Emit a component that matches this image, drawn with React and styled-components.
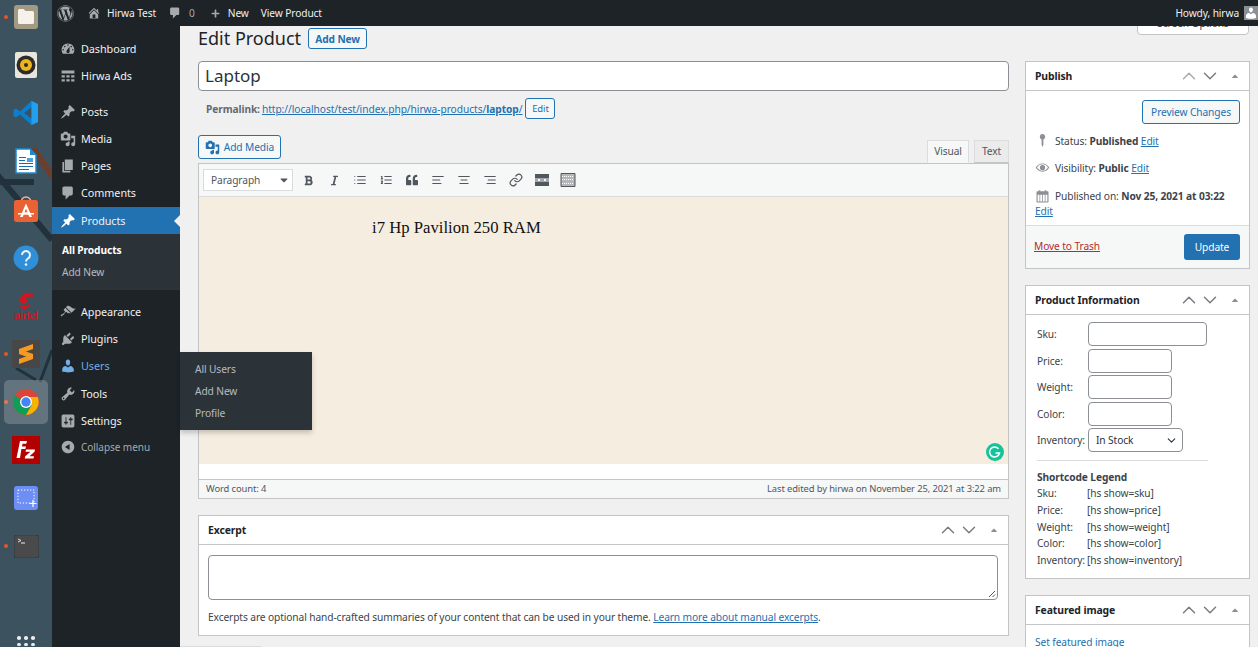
import React from "react";
import styled, { createGlobalStyle } from "styled-components";
import { FaWordpress, FaBold, FaItalic, FaQuoteLeft, FaCaretDown, FaCaretUp, FaPlus } from "react-icons/fa";
import { LuList, LuListOrdered, LuAlignLeft, LuAlignCenter, LuAlignRight, LuLink, LuChevronUp, LuChevronDown } from "react-icons/lu";

const FONT = `"Noto Sans", "Open Sans", sans-serif`;

const Global = createGlobalStyle`
  html, body { margin: 0; padding: 0; height: 100%; overflow: hidden; }
  body { font-family: ${FONT}; font-size: 10.2px; letter-spacing: -0.1px; color: #3c434a; background: #f0f0f1; }
  * { box-sizing: border-box; }
  a { color: #2271b1; }
`;

const dashicons = {
  dashboard: "M3.76 16h12.48c1.1-1.37 1.76-3.11 1.76-5 0-4.42-3.58-8-8-8s-8 3.58-8 8c0 1.89.66 3.63 1.76 5zM10 4c.55 0 1 .45 1 1s-.45 1-1 1-1-.45-1-1 .45-1 1-1zM6 6c.55 0 1 .45 1 1s-.45 1-1 1-1-.45-1-1 .45-1 1-1zm8 0c.55 0 1 .45 1 1s-.45 1-1 1-1-.45-1-1 .45-1 1-1zm-5.37 5.55L12 7v6c0 1.1-.9 2-2 2s-2-.9-2-2c0-.57.24-1.08.63-1.45zM4 10c.55 0 1 .45 1 1s-.45 1-1 1-1-.45-1-1 .45-1 1-1zm12 0c.55 0 1 .45 1 1s-.45 1-1 1-1-.45-1-1 .45-1 1-1z",
  ads: "M2 3h16v4H2zM2 9h4v3H2zM8 9h4v3H8zM14 9h4v3h-4zM2 14h4v3H2zM8 14h4v3H8zM14 14h4v3h-4z",
  pin: "M10.44 3.02l1.82-1.82 6.36 6.35-1.83 1.82c-1.05-.68-2.48-.57-3.41.36l-.75.75c-.92.93-1.04 2.35-.35 3.41l-1.83 1.82-2.41-2.41-2.8 2.79c-.42.42-3.38 2.71-3.8 2.29s1.86-3.39 2.28-3.81l2.79-2.79L4.1 9.36l1.83-1.82c1.05.69 2.48.57 3.4-.36l.75-.75c.93-.92 1.05-2.35.36-3.41z",
  media: "M13 11V4c0-.55-.45-1-1-1h-1.67L9 1H5L3.67 3H2c-.55 0-1 .45-1 1v7c0 .55.45 1 1 1h10c.55 0 1-.45 1-1zM7 4.5c1.38 0 2.5 1.12 2.5 2.5S8.38 9.5 7 9.5 4.5 8.38 4.5 7 5.62 4.5 7 4.5zM14 6h5v10.5c0 1.38-1.12 2.5-2.5 2.5S14 17.88 14 16.5s1.12-2.5 2.5-2.5c.17 0 .34.02.5.05V9h-3V6zm-4 8.05V13h2v3.5c0 1.38-1.12 2.5-2.5 2.5S7 17.88 7 16.5 8.12 14 9.5 14c.17 0 .34.02.5.05z",
  page: "M6 15V2h10v13H6zm-1 1h8v2H3V5h2v11z",
  comment: "M5 2h9c1.1 0 2 .9 2 2v7c0 1.1-.9 2-2 2h-2l-5 5v-5H5c-1.1 0-2-.9-2-2V4c0-1.1.9-2 2-2z",
  brush: "M14.48 11.06L7.41 3.99l1.5-1.5c.5-.56 2.3-.47 3.51.32 1.21.8 1.43 1.28 2.91 2.1 1.18.64 2.45 1.26 4.45.85zm-.71.71L6.7 4.7 4.93 6.47c-.39.39-.39 1.02 0 1.41l1.06 1.06c.39.39.39 1.03 0 1.42-.6.6-1.43 1.11-2.21 1.69-.35.26-.7.53-1.01.84C1.43 13.23.5 14.84 1 15.3c.49.46 2.06-.43 3.4-1.8.3-.3.57-.66.83-1.01.59-.78 1.09-1.62 1.7-2.22.39-.39 1.02-.39 1.41 0l1.06 1.06c.39.39 1.02.39 1.41 0z",
  plug: "M13.11 4.36L9.87 7.6 8 5.73l3.24-3.24c.35-.34 1.05-.2 1.56.32.52.51.66 1.21.31 1.55zm-8 1.77l.91-1.12 9.01 9.01-1.19.84c-.71.71-2.63 1.16-3.82 1.16H6.14L4.9 17.26c-.59.59-1.54.59-2.12 0-.59-.58-.59-1.53 0-2.12l1.24-1.24v-3.88c0-1.13.4-3.19 1.09-3.89zm7.26 3.97l3.24-3.24c.34-.35 1.04-.21 1.55.31.52.51.66 1.21.31 1.55l-3.24 3.25z",
  user: "M10 9.25c-2.27 0-2.73-3.44-2.73-3.44C7 4.02 7.82 2 9.97 2c2.16 0 2.98 2.02 2.71 3.81 0 0-.41 3.44-2.68 3.44zm0 2.57L12.72 10c2.39 0 4.52 2.33 4.52 4.53v2.49s-3.65 1.13-7.24 1.13c-3.65 0-7.24-1.13-7.24-1.13v-2.49c0-2.25 1.94-4.48 4.47-4.48z",
  tools: "M16.68 9.77c-1.34 1.34-3.3 1.67-4.95.99l-5.41 6.52c-.99.99-2.59.99-3.58 0s-.99-2.59 0-3.57l6.52-5.42c-.68-1.65-.35-3.61.99-4.95 1.28-1.28 3.12-1.62 4.72-1.06l-2.89 2.89 2.82 2.82 2.86-2.87c.53 1.58.18 3.39-1.08 4.65zM3.81 16.21c.4.39 1.04.39 1.43 0 .4-.4.4-1.04 0-1.43-.39-.4-1.03-.4-1.43 0-.39.39-.39 1.03 0 1.43z",
  settings: "M18 16V4c0-1.1-.9-2-2-2H4c-1.1 0-2 .9-2 2v12c0 1.1.9 2 2 2h12c1.1 0 2-.9 2-2zM8 11h1c.55 0 1 .45 1 1s-.45 1-1 1H8v1.5c0 .28-.22.5-.5.5s-.5-.22-.5-.5V13H6c-.55 0-1-.45-1-1s.45-1 1-1h1V5.5c0-.28.22-.5.5-.5s.5.22.5.5V11zm5-2h-1c-.55 0-1-.45-1-1s.45-1 1-1h1V5.5c0-.28.22-.5.5-.5s.5.22.5.5V7h1c.55 0 1 .45 1 1s-.45 1-1 1h-1v5.5c0 .28-.22.5-.5.5s-.5-.22-.5-.5V9z",
  collapse: "M10 2.16c4.33 0 7.84 3.51 7.84 7.84s-3.51 7.84-7.84 7.84S2.16 14.33 2.16 10 5.71 2.16 10 2.16zm2 11.72V6.12L6.18 9.97z",
  home: "M16 8.5l1.53 1.53-1.06 1.06L10 4.62l-6.47 6.47-1.06-1.06L10 2.5l4 4v-2h2v4zm-6-2.46l6 5.99V18H4v-5.97zM12 17v-5H8v5h4z",
  location: "M10 1.5a3.6 3.6 0 0 1 1.2 7v7.2L10 18.5l-1.2-2.8V8.5a3.6 3.6 0 0 1 1.2-7z",
  eye: "M10 4.5c4 0 7.2 2.4 9 5.5-1.8 3.1-5 5.5-9 5.5S2.8 13.1 1 10c1.8-3.1 5-5.5 9-5.5zm0 1.3c-3.1 0-5.7 1.7-7.3 4.2 1.6 2.5 4.2 4.2 7.3 4.2s5.7-1.7 7.3-4.2c-1.6-2.5-4.2-4.2-7.3-4.2zM10 6.500a3.500 3.500 0 1 1 0 7 3.500 3.500 0 0 1 0-7z",
  calendar: "M3 3h2V1.500h2V3h6V1.500h2V3h2a1 1 0 0 1 1 1v13a1 1 0 0 1-1 1H3a1 1 0 0 1-1-1V4a1 1 0 0 1 1-1zm.500 4.500V16.500h2.500v-9zm3.500 0v9h2.500v-9zm3.500 0v9H13v-9zm3.500 0v9h2.500v-9z",
};

const Dashicon = ({ name, size = 16, className }) => (
  <svg className={className} width={size} height={size} viewBox="0 0 20 20" fill="currentColor" aria-hidden="true">
    <path d={dashicons[name]} fillRule="evenodd" />
  </svg>
);

/* ---- ubuntu dock ---- */
const Shell = styled.div`
  display: flex;
  width: 100%;
  height: 100vh;
  overflow: hidden;
`;
const Dock = styled.aside`
  position: relative;
  flex: 0 0 52px;
  display: flex;
  flex-direction: column;
  align-items: center;
  background: #3d525f;
  overflow: hidden;
`;
const Wallpaper = styled.svg`
  position: absolute;
  inset: 0;
`;
const DockList = styled.div`
  position: relative;
  margin-top: -7px;
  display: flex;
  flex-direction: column;
  width: 100%;
`;
const DockItem = styled.div`
  position: relative;
  height: 48.1px;
  display: flex;
  align-items: center;
  justify-content: center;
  ${(p) => p.$running && `
    &::before {
      content: "";
      position: absolute;
      left: 4px;
      top: 50%;
      margin-top: -2px;
      width: 4px;
      height: 4px;
      border-radius: 50%;
      background: #e95420;
    }
  `}
  ${(p) => p.$active && `
    &::after {
      content: "";
      position: absolute;
      left: 4px;
      top: 2px;
      width: 44px;
      height: 44px;
      border-radius: 5px;
      background: rgba(255, 255, 255, 0.2);
    }
    & > svg { position: relative; z-index: 1; }
  `}
`;
const AirtelWord = styled.span`
  position: absolute;
  left: 0;
  right: 0;
  top: 27px;
  text-align: center;
  font: bold 10.5px "Liberation Sans", sans-serif;
  color: #d8131b;
  letter-spacing: -0.2px;
`;
const AppGrid = styled.div`
  position: absolute;
  left: 17px;
  top: 636px;
  display: grid;
  grid-template-columns: repeat(3, 4px);
  gap: 3.2px;
  & > i { width: 3.6px; height: 3.6px; border-radius: 50%; background: #e8ecee; }
`;

const FolderIcon = () => (
  <svg width="26" height="26" viewBox="0 0 26 26"><rect x="1" y="1" width="24" height="24" rx="3" fill="#a39a83" /><path d="M5 6.500a1.500 1.500 0 0 1 1.500-1.500h4l2 2h7a1.500 1.500 0 0 1 1.500 1.500v10a1.500 1.500 0 0 1-1.500 1.500h-13A1.500 1.500 0 0 1 5 18.500z" fill="#f5f2ec" /></svg>
);
const RhythmIcon = () => (
  <svg width="22" height="26" viewBox="0 0 22 26"><rect width="22" height="26" rx="2" fill="#e9e6dc" /><circle cx="11" cy="13" r="9.500" fill="#2b2b2b" /><circle cx="11" cy="13" r="6" fill="#edb51c" /><circle cx="11" cy="13" r="2" fill="#2b2b2b" /></svg>
);
const CodeIcon = () => (
  <svg width="26" height="26" viewBox="0 0 26 26"><path d="M18.500 1L25 4v18l-6.500 3L7 14.500l-4 3-2.500-1.500v-6L3 8.500l4 3z" fill="#0a7fd0" /><path d="M18.500 7.500L11 13l7.500 5.500z" fill="#3d525f" /><path d="M18.500 1L25 4v18l-6.500 3z" fill="#22a0ee" /></svg>
);
const WriterIcon = () => (
  <svg width="22" height="26" viewBox="0 0 22 26"><path d="M1 1h14l6 6v18H1z" fill="#fff" stroke="#1b8ad0" strokeWidth="1.500" /><path d="M15 1l6 6h-6z" fill="#1b8ad0" /><path d="M4 9h7v1H4zM4 12h6v1H4zM4 15h14v1H4zM4 18h14v1H4zM4 21h10v1H4z" fill="#1b6ea8" /><rect x="12" y="10" width="6" height="4" fill="#4aa3dc" /></svg>
);
const StoreIcon = () => (
  <svg width="24" height="26" viewBox="0 0 24 26"><path d="M7 6a5 5 0 0 1 10 0" fill="none" stroke="#f6b49a" strokeWidth="1.300" /><rect y="4" width="24" height="22" rx="2.500" fill="#ea6133" /><path d="M12 7.500L18 21h-2.700l-1-2.500H9.700l-1 2.500H6zm0 5l-1.500 3.800h3z" fill="#fff" fillRule="evenodd" /><rect x="4" y="17" width="16" height="1.500" fill="#fff" /></svg>
);
const HelpIcon = () => (
  <svg width="26" height="26" viewBox="0 0 26 26"><circle cx="13" cy="13" r="12.500" fill="#2f8fd8" /><path d="M9 10a4 4 0 1 1 6 3.500c-1.300.8-2 1.400-2 3" fill="none" stroke="#f2f7fb" strokeWidth="2" /><circle cx="13" cy="19.500" r="1.300" fill="#f2f7fb" /></svg>
);
const AirtelIcon = () => (
  <svg width="16" height="18" viewBox="0 0 16 18" style={{ marginTop: -10 }}><path d="M13 1C8 0 2 3 2 8c0 3 3 4 5 3 3-1 3-4 0-4 2-2 5-3 7-2 2-1 1-4-1-4zM1 14c4 1 9-1 11-3 0 3-2 5-5 6-3 0-5-1-6-3z" fill="#d8131b" /></svg>
);
const SublimeIcon = () => (
  <svg width="28" height="28" viewBox="0 0 28 28"><rect width="28" height="28" rx="2" fill="#474747" /><path d="M21 4v5L7 14V9zM21 14v5L7 24v-5zM7 9l14 5v5L7 14z" fill="#f79a25" /></svg>
);
const ChromeIcon = () => (
  <svg width="26" height="26" viewBox="0 0 26 26"><circle cx="13" cy="13" r="13" fill="#db4437" /><path d="M13 13L1.700 6.500A13 13 0 0 0 13 26l5-9z" fill="#0f9d58" /><path d="M13 8h11.700A13 13 0 0 1 13 26l5.500-9.500z" fill="#f4b400" /><circle cx="13" cy="13" r="6" fill="#fff" /><circle cx="13" cy="13" r="4.700" fill="#4285f4" /></svg>
);
const ZillaIcon = () => (
  <svg width="28" height="28" viewBox="0 0 28 28"><rect width="28" height="28" fill="#b20000" /><path d="M8 5h7l-.7 2.800H10.500L10 10.500h4L13.300 13H9.400L8 22H4.500zM14 13.500h9l-.5 2.200-5 4.500H22l-.5 2.300H12.700l.5-2.200 5.200-4.600H13.500z" fill="#fff" /></svg>
);
const ShotIcon = () => (
  <svg width="24" height="24" viewBox="0 0 24 24"><rect width="24" height="24" rx="3" fill="#6d8ef5" /><rect x="4" y="4" width="16" height="13" fill="none" stroke="#fff" strokeDasharray="1.300 1.700" /><path d="M19 14v7M15.500 17.500h7" stroke="#fff" strokeWidth="1.200" /></svg>
);
const TermIcon = () => (
  <svg width="25" height="23" viewBox="0 0 25 23"><rect width="25" height="23" rx="3" fill="#4a4a4a" stroke="#2f3a42" /><path d="M4 4l3 1.500L4 7" fill="none" stroke="#eee" strokeWidth=".9" /><path d="M7 8h4" stroke="#eee" /></svg>
);

const dockApps = [
  { icon: FolderIcon, running: true }, { icon: RhythmIcon }, { icon: CodeIcon }, { icon: WriterIcon },
  { icon: StoreIcon }, { icon: HelpIcon }, { icon: AirtelIcon, airtel: true }, { icon: SublimeIcon, running: true },
  { icon: ChromeIcon, running: true, active: true }, { icon: ZillaIcon }, { icon: ShotIcon }, { icon: TermIcon, running: true },
];

/* ---- wp admin bar ---- */
const Page = styled.div`
  position: relative;
  flex: 1;
  min-width: 0;
  display: flex;
  flex-direction: column;
`;
const AdminBar = styled.header`
  position: relative;
  z-index: 5;
  flex: 0 0 26px;
  display: flex;
  align-items: center;
  padding-left: 5px;
  background: #1d2327;
  color: #f0f0f1;
`;
const BarItem = styled.span`
  display: inline-flex;
  align-items: center;
  gap: ${(p) => p.$gap || 5}px;
  margin-right: ${(p) => p.$mr || 0}px;
  & > svg { color: #a7aaad; }
`;
const Howdy = styled.span`
  margin-left: auto;
  display: inline-flex;
  align-items: center;
  gap: 5px;
`;
const Avatar = styled.span`
  width: 14px;
  height: 14px;
  display: flex;
  align-items: flex-end;
  justify-content: center;
  background: #8c8f94;
  color: #fff;
  overflow: hidden;
`;
const Body = styled.div`
  flex: 1;
  min-height: 0;
  display: flex;
`;

/* ---- left menu ---- */
const Sidebar = styled.nav`
  position: relative;
  z-index: 3;
  flex: 0 0 128px;
  background: #1d2327;
  padding-top: 9px;
`;
const MenuRow = styled.div`
  position: relative;
  height: ${(p) => p.$h || 27}px;
  margin-top: ${(p) => p.$mt || 0}px;
  display: flex;
  align-items: center;
  gap: 5.5px;
  padding-left: 7.5px;
  font-size: ${(p) => (p.$muted ? 10 : 10.8)}px;
  letter-spacing: -0.05px;
  color: ${(p) => (p.$hover ? "#72aee6" : p.$muted ? "#a7aaad" : "#f0f0f1")};
  background: ${(p) => (p.$current ? "#2271b1" : "transparent")};
  & > svg { color: ${(p) => (p.$hover ? "#72aee6" : p.$current ? "#fff" : "#a7aaad")}; flex: none; }
  ${(p) => p.$current && `
    &::after {
      content: "";
      position: absolute;
      right: 0;
      top: 50%;
      margin-top: -6px;
      border: 6px solid transparent;
      border-right-color: #f0f0f1;
    }
  `}
`;
const SubMenu = styled.div`
  background: #2c3338;
  height: 56px;
  padding: 5px 0 0 10px;
`;
const SubLink = styled.div`
  height: 22px;
  line-height: 22px;
  color: ${(p) => (p.$current ? "#fff" : "rgba(240,246,252,.7)")};
  font-weight: ${(p) => (p.$current ? 700 : 400)};
`;
const Flyout = styled.div`
  position: absolute;
  left: 128px;
  top: 326px;
  width: 132px;
  height: 78px;
  padding: 6px 0 0 15px;
  background: #2c3338;
  box-shadow: 0 3px 5px rgba(0, 0, 0, 0.2);
`;

/* ---- content ---- */
const Content = styled.main`
  position: relative;
  flex: 1;
  min-width: 0;
  padding-left: 18px;
  overflow: hidden;
`;
const ScreenTab = styled.div`
  position: absolute;
  right: 9px;
  top: -11px;
  width: 112px;
  height: 20px;
  background: #fff;
  border: 1px solid #c3c4c7;
  border-radius: 0 0 4px 4px;
  text-align: center;
  line-height: 14px;
`;
const BottomEdge = styled.div`
  position: absolute;
  left: 0;
  bottom: 0;
  width: 82px;
  height: 1px;
  background: #dcdcde;
`;
const HeadRow = styled.div`
  display: flex;
  align-items: center;
  height: 21px;
  margin: 2px 0 12px;
  gap: 7px;
`;
const Title = styled.h1`
  margin: -2px 0 0;
  font-size: 18px;
  font-weight: 400;
  letter-spacing: 0;
  color: #1d2327;
  white-space: nowrap;
`;
const OutlineBtn = styled.a`
  display: inline-flex;
  align-items: center;
  justify-content: center;
  gap: 4px;
  flex: none;
  width: ${(p) => p.$w}px;
  height: ${(p) => p.$h}px;
  border: 1px solid #2271b1;
  border-radius: 3px;
  background: #f6f7f7;
  color: #2271b1;
  font-size: ${(p) => p.$fs || 10.2}px;
  font-weight: ${(p) => (p.$bold ? 700 : 400)};
  text-decoration: none;
  white-space: nowrap;
`;
const Columns = styled.div`
  display: grid;
  grid-template-columns: 811px 225px;
  gap: 16px;
  align-items: start;
`;
const TitleInput = styled.div`
  height: 30px;
  padding-left: 6px;
  background: #fff;
  border: 1px solid #8c8f94;
  border-radius: 4px;
  color: #2c3338;
  font-size: 17px;
  letter-spacing: 0;
  line-height: 28px;
`;
const Permalink = styled.div`
  display: flex;
  align-items: center;
  gap: 2px;
  height: 21px;
  margin: 7px 0 16px 8px;
  white-space: nowrap;
  & > b { color: #646970; }
  & > a:first-of-type { letter-spacing: -0.05px; margin-right: 1px; }
`;
const EditorTabs = styled.div`
  display: flex;
  justify-content: space-between;
  align-items: flex-start;
  height: 28px;
`;
const TabGroup = styled.div`
  display: flex;
  gap: 5px;
  margin-top: 5px;
`;
const Tab = styled.span`
  height: 23px;
  width: ${(p) => p.$w}px;
  border: 1px solid #dcdcde;
  border-bottom-color: ${(p) => (p.$on ? "#f6f7f7" : "#c3c4c7")};
  background: ${(p) => (p.$on ? "#f6f7f7" : "#ebebeb")};
  color: #50575e;
  line-height: 20px;
  text-align: center;
`;
const EditorFrame = styled.div`
  border: 1px solid #c3c4c7;
  background: #fff;
`;
const Toolbar = styled.div`
  display: flex;
  align-items: center;
  height: 33px;
  padding-left: 4px;
  background: #f6f7f7;
  border-bottom: 1px solid #dcdcde;
  color: #50575e;
`;
const FormatSelect = styled.div`
  position: relative;
  width: 90px;
  height: 22px;
  margin-right: 2px;
  padding-left: 7px;
  background: #fff;
  border: 1px solid #dcdcde;
  line-height: 20px;
  color: #50575e;
  & > svg { position: absolute; right: 2px; top: 4px; }
`;
const ToolBtn = styled.span`
  width: 26px;
  height: 26px;
  display: flex;
  align-items: center;
  justify-content: center;
`;
const EditArea = styled.div`
  position: relative;
  height: 267px;
  padding: 19px 0 0 173px;
  background: #f5eee0;
  font-family: "Liberation Serif", serif;
  font-size: 16.7px;
  letter-spacing: 0;
  line-height: 24px;
  color: #111;
`;
const Grammarly = styled.svg`
  position: absolute;
  right: 4px;
  bottom: 3px;
`;
const WhiteGap = styled.div`
  height: 15px;
  background: #fff;
`;
const StatusBar = styled.div`
  display: flex;
  justify-content: space-between;
  align-items: center;
  height: 19px;
  padding: 0 7px 2px;
  background: #f6f7f7;
  border-top: 1px solid #c3c4c7;
  font-size: 9.4px;
  color: #50575e;
`;
const Box = styled.section`
  background: #fff;
  border: 1px solid #c3c4c7;
  margin-top: ${(p) => p.$mt || 0}px;
`;
const BoxHead = styled.div`
  display: flex;
  align-items: center;
  justify-content: space-between;
  height: 29px;
  padding: 0 9px 0 9px;
  border-bottom: 1px solid #c3c4c7;
  font-size: 10.4px;
  font-weight: 700;
  color: #1d2327;
`;
const HeadIcons = styled.span`
  display: flex;
  align-items: center;
  color: #787c82;
  & > svg:nth-child(1) { margin-right: -1px; color: ${(p) => (p.$first ? "#a7aaad" : "#787c82")}; }
  & > svg:nth-child(3) { margin-left: 9px; color: #8c8f94; }
`;
const ExcerptBody = styled.div`
  padding: 10px 10px 0 9px;
  height: 90px;
`;
const ExcerptArea = styled.div`
  position: relative;
  height: 45px;
  background: #fff;
  border: 1px solid #8c8f94;
  border-radius: 4px;
  & > svg { position: absolute; right: 1px; bottom: 1px; }
`;
const HelpText = styled.p`
  margin: 10px 0 0;
  white-space: nowrap;
`;

/* ---- right column ---- */
const PublishTop = styled.div`
  padding: 9px 9px 0 9px;
  height: 134px;
`;
const PreviewWrap = styled.div`
  display: flex;
  justify-content: flex-end;
  margin-bottom: 3px;
`;
const PubRow = styled.div`
  display: flex;
  align-items: center;
  gap: 5px;
  height: ${(p) => p.$h || 27}px;
  margin-top: ${(p) => p.$mt || 0}px;
  white-space: nowrap;
  & > svg { color: #8c8f94; flex: none; }
`;
const TimeEdit = styled.a`
  display: block;
  margin-top: -2px;
`;
const PublishFoot = styled.div`
  display: flex;
  align-items: center;
  justify-content: space-between;
  height: 43px;
  padding: 0 9px 0 8px;
  background: #f6f7f7;
  border-top: 1px solid #dcdcde;
  & > a { color: #b32d2e; margin-top: -2px; }
`;
const UpdateBtn = styled.span`
  width: 56px;
  height: 26px;
  background: #2271b1;
  border-radius: 3px;
  color: #fff;
  line-height: 26px;
  text-align: center;
`;
const InfoBody = styled.div`
  padding: 7px 11px 0;
  height: 263px;
`;
const FieldGrid = styled.div`
  display: grid;
  grid-template-columns: 51px 1fr;
  row-gap: 2.6px;
  align-items: center;
`;
const Field = styled.div`
  height: 24px;
  width: ${(p) => p.$w}px;
  background: #fff;
  border: 1px solid #8c8f94;
  border-radius: 4px;
`;
const SelectField = styled(Field)`
  display: flex;
  align-items: center;
  justify-content: space-between;
  padding: 0 4px 0 7px;
  color: #2c3338;
`;
const Rule = styled.hr`
  width: 171px;
  margin: 8px 0 8px;
  border: 0;
  border-top: 1px solid #dcdcde;
`;
const LegendTitle = styled.div`
  font-weight: 700;
  line-height: 16px;
`;
const LegendGrid = styled.div`
  display: grid;
  grid-template-columns: 50px 1fr;
  line-height: 16.7px;
  white-space: nowrap;
`;
const FeaturedBody = styled.div`
  padding: 11px 9px;
  line-height: 13px;
  & > a { text-decoration: none; }
`;

function BoxTitle({ children, first }) {
  return (
    <BoxHead>
      {children}
      <HeadIcons $first={first}>
        <LuChevronUp size={22} strokeWidth={1.6} />
        <LuChevronDown size={22} strokeWidth={1.6} />
        <FaCaretUp size={10} />
      </HeadIcons>
    </BoxHead>
  );
}

const mainMenu = [
  { icon: "dashboard", label: "Dashboard" },
  { icon: "ads", label: "Hirwa Ads" },
  { icon: "pin", label: "Posts", mt: 9 },
  { icon: "media", label: "Media" },
  { icon: "page", label: "Pages" },
  { icon: "comment", label: "Comments" },
];
const lowerMenu = [
  { icon: "brush", label: "Appearance", mt: 8 },
  { icon: "plug", label: "Plugins" },
  { icon: "user", label: "Users", hover: true },
  { icon: "tools", label: "Tools", mt: 1 },
  { icon: "settings", label: "Settings" },
];

const fields = [["Sku:", 119], ["Price:", 84], ["Weight:", 84], ["Color:", 84]];
const legend = [["Sku:", "sku"], ["Price:", "price"], ["Weight:", "weight"], ["Color:", "color"], ["Inventory:", "inventory"]];

const MoreIcon = () => (
  <svg width="16" height="16" viewBox="0 0 16 16" fill="currentColor"><path d="M1 2h14v4.500H1zM1 9.500h14V14H1zM1 7.500h3v1H1zM6 7.500h4v1H6zM12 7.500h3v1h-3z" /></svg>
);
const SinkIcon = () => (
  <svg width="16" height="16" viewBox="0 0 16 16" fill="none" stroke="currentColor"><path d="M1 1.500h14v13H1z" fill="#b4b6b8" /><path d="M2 4.500h12M2 7.500h12M2 11.500h12" strokeDasharray="1 1" stroke="#fff" /></svg>
);

export default function App() {
  return (
    <>
      <Global />
      <Shell>
        <Dock>
          <Wallpaper width="52" height="647" viewBox="0 0 52 647">
            <path d="M-5 172L52 240M0 182h34" stroke="#22323c" strokeWidth="6" fill="none" />
            <path d="M33 148l22 32" stroke="#6b3f2c" strokeWidth="6" />
            <path d="M52 350l-12 32M16 368l20 12" stroke="#22323c" strokeWidth="3" fill="none" />
          </Wallpaper>
          <DockList>
            {dockApps.map((app, i) => (
              <DockItem key={i} $running={app.running} $active={app.active}>
                <app.icon />
                {app.airtel && <AirtelWord>airtel</AirtelWord>}
              </DockItem>
            ))}
          </DockList>
          <AppGrid>
            {Array.from({ length: 6 }).map((_, i) => <i key={i} />)}
          </AppGrid>
        </Dock>
        <Page>
          <AdminBar>
            <BarItem $mr={13}><FaWordpress size={17} /></BarItem>
            <BarItem $mr={12} $gap={6}><Dashicon name="home" size={14} />Hirwa Test</BarItem>
            <BarItem $mr={16} $gap={7}><Dashicon name="comment" size={14} /><span style={{ color: "#a7aaad" }}>0</span></BarItem>
            <BarItem $mr={12} $gap={8}><FaPlus size={9} />New</BarItem>
            <BarItem>View Product</BarItem>
            <Howdy>
              Howdy, hirwa
              <Avatar><Dashicon name="user" size={14} /></Avatar>
            </Howdy>
          </AdminBar>
          <Body>
            <Sidebar>
              {mainMenu.map((m) => (
                <MenuRow key={m.label} $mt={m.mt}><Dashicon name={m.icon} size={16} />{m.label}</MenuRow>
              ))}
              <MenuRow $current $mt={1}><Dashicon name="pin" size={16} />Products</MenuRow>
              <SubMenu>
                <SubLink $current>All Products</SubLink>
                <SubLink>Add New</SubLink>
              </SubMenu>
              {lowerMenu.map((m) => (
                <MenuRow key={m.label} $mt={m.mt} $hover={m.hover}><Dashicon name={m.icon} size={16} />{m.label}</MenuRow>
              ))}
              <MenuRow $muted $h={26}><Dashicon name="collapse" size={16} />Collapse menu</MenuRow>
              <Flyout>
                <SubLink>All Users</SubLink>
                <SubLink>Add New</SubLink>
                <SubLink>Profile</SubLink>
              </Flyout>
            </Sidebar>
            <Content>
              <ScreenTab>Screen Options</ScreenTab>
              <HeadRow>
                <Title>Edit Product</Title>
                <OutlineBtn $w={59} $h={21} $bold>Add New</OutlineBtn>
              </HeadRow>
              <Columns>
                <div>
                  <TitleInput>Laptop</TitleInput>
                  <Permalink>
                    <b>Permalink:</b>
                    <a href="#p">http://localhost/test/index.php/hirwa-products/<b>laptop</b>/</a>
                    <OutlineBtn $w={30} $h={21} $fs={9.5}>Edit</OutlineBtn>
                  </Permalink>
                  <EditorTabs>
                    <OutlineBtn $w={83} $h={24}><Dashicon name="media" size={15} />Add Media</OutlineBtn>
                    <TabGroup>
                      <Tab $w={42} $on>Visual</Tab>
                      <Tab $w={35}>Text</Tab>
                    </TabGroup>
                  </EditorTabs>
                  <EditorFrame>
                    <Toolbar>
                      <FormatSelect>Paragraph<FaCaretDown size={12} /></FormatSelect>
                      <ToolBtn><FaBold size={11} /></ToolBtn>
                      <ToolBtn><FaItalic size={11} /></ToolBtn>
                      <ToolBtn><LuList size={14} /></ToolBtn>
                      <ToolBtn><LuListOrdered size={14} /></ToolBtn>
                      <ToolBtn><FaQuoteLeft size={12} /></ToolBtn>
                      <ToolBtn><LuAlignLeft size={14} /></ToolBtn>
                      <ToolBtn><LuAlignCenter size={14} /></ToolBtn>
                      <ToolBtn><LuAlignRight size={14} /></ToolBtn>
                      <ToolBtn><LuLink size={14} /></ToolBtn>
                      <ToolBtn><MoreIcon /></ToolBtn>
                      <ToolBtn><SinkIcon /></ToolBtn>
                    </Toolbar>
                    <EditArea>
                      i7 Hp Pavilion 250 RAM
                      <Grammarly width="18" height="18" viewBox="0 0 18 18">
                        <circle cx="9" cy="9" r="9" fill="#15c39a" />
                        <path d="M12.500 5.800a5 5 0 1 0 1 4.200H9.500" fill="none" stroke="#fff" strokeWidth="1.500" />
                      </Grammarly>
                    </EditArea>
                    <WhiteGap />
                    <StatusBar>
                      <span>Word count: 4</span>
                      <span>Last edited by hirwa on November 25, 2021 at 3:22 am</span>
                    </StatusBar>
                  </EditorFrame>
                  <Box $mt={16}>
                    <BoxTitle>Excerpt</BoxTitle>
                    <ExcerptBody>
                      <ExcerptArea>
                        <svg width="8" height="8" viewBox="0 0 8 8" stroke="#555"><path d="M1 7l6-6M4.500 7L7 4.500" /></svg>
                      </ExcerptArea>
                      <HelpText>
                        Excerpts are optional hand-crafted summaries of your content that can be used in your theme.{" "}
                        <a href="#l">Learn more about manual excerpts</a>.
                      </HelpText>
                    </ExcerptBody>
                  </Box>
                </div>
                <div>
                  <Box>
                    <BoxTitle first>Publish</BoxTitle>
                    <PublishTop>
                      <PreviewWrap><OutlineBtn $w={98} $h={24}>Preview Changes</OutlineBtn></PreviewWrap>
                      <PubRow><Dashicon name="location" size={15} /><span>Status: <b>Published</b> <a href="#e">Edit</a></span></PubRow>
                      <PubRow><Dashicon name="eye" size={15} /><span>Visibility: <b>Public</b> <a href="#e">Edit</a></span></PubRow>
                      <PubRow $h={20} $mt={5}><Dashicon name="calendar" size={15} /><span>Published on: <b>Nov 25, 2021 at 03:22</b></span></PubRow>
                      <TimeEdit href="#e">Edit</TimeEdit>
                    </PublishTop>
                    <PublishFoot>
                      <a href="#t">Move to Trash</a>
                      <UpdateBtn>Update</UpdateBtn>
                    </PublishFoot>
                  </Box>
                  <Box $mt={16}>
                    <BoxTitle>Product Information</BoxTitle>
                    <InfoBody>
                      <FieldGrid>
                        {fields.map(([label, w]) => (
                          <React.Fragment key={label}>
                            <span>{label}</span>
                            <Field $w={w} />
                          </React.Fragment>
                        ))}
                        <span>Inventory:</span>
                        <SelectField $w={95}>In Stock<LuChevronDown size={13} /></SelectField>
                      </FieldGrid>
                      <Rule />
                      <LegendTitle>Shortcode Legend</LegendTitle>
                      <LegendGrid>
                        {legend.map(([label, key]) => (
                          <React.Fragment key={key}>
                            <span>{label}</span>
                            <span>[hs show={key}]</span>
                          </React.Fragment>
                        ))}
                      </LegendGrid>
                    </InfoBody>
                  </Box>
                  <Box $mt={16}>
                    <BoxTitle>Featured image</BoxTitle>
                    <FeaturedBody><a href="#f">Set featured image</a></FeaturedBody>
                  </Box>
                </div>
              </Columns>
              <BottomEdge />
            </Content>
          </Body>
        </Page>
      </Shell>
    </>
  );
}
